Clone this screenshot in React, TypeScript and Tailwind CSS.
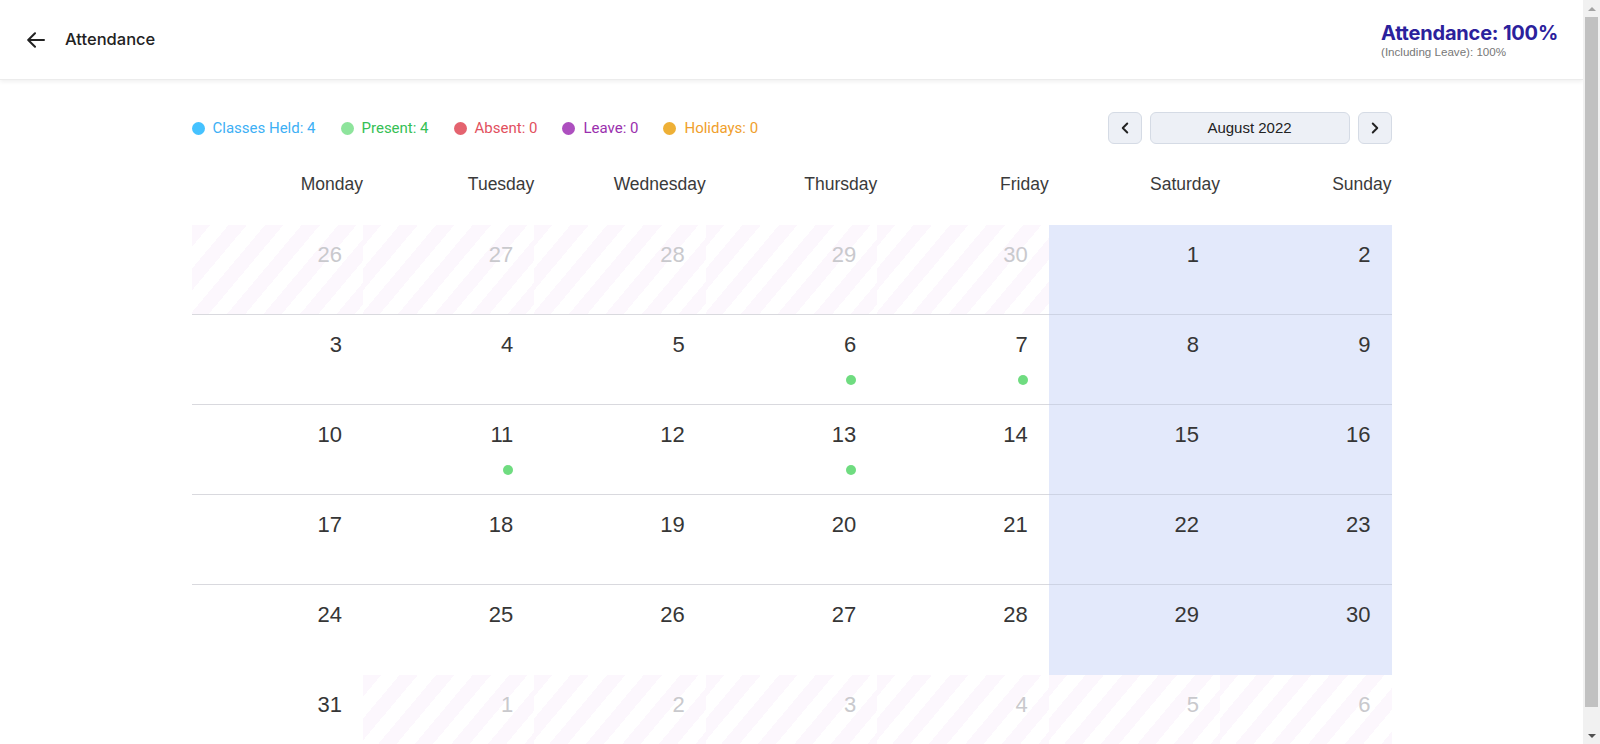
import { ChevronLeft, ChevronRight } from 'lucide-react'

type Cell = { day: number; out?: boolean; present?: boolean }

const DAYS = ['Monday', 'Tuesday', 'Wednesday', 'Thursday', 'Friday', 'Saturday', 'Sunday']

const PRESENT = [6, 7, 11, 13]

// August 2022 grid as laid out on the page
function buildWeeks(): Cell[][] {
  const cells: Cell[] = []
  for (let d = 26; d <= 30; d++) cells.push({ day: d, out: true })
  for (let d = 1; d <= 31; d++) cells.push({ day: d, present: PRESENT.includes(d) })
  for (let d = 1; d <= 6; d++) cells.push({ day: d, out: true })
  const weeks: Cell[][] = []
  for (let i = 0; i < cells.length; i += 7) weeks.push(cells.slice(i, i + 7))
  return weeks
}

const legend = [
  { label: 'Classes Held: 4', dot: 'bg-[#45c2ff]', text: 'text-[#3db0f5]' },
  { label: 'Present: 4', dot: 'bg-[#8ee49c]', text: 'text-[#35c055]' },
  { label: 'Absent: 0', dot: 'bg-[#e4636f]', text: 'text-[#e2505e]' },
  { label: 'Leave: 0', dot: 'bg-[#ad4fbf]', text: 'text-[#9a2fae]' },
  { label: 'Holidays: 0', dot: 'bg-[#eeb036]', text: 'text-[#f0a02c]' },
]

function DayCell({ cell, col, row }: { cell: Cell; col: number; row: number }) {
  const weekend = col >= 5 && !cell.out
  const bordered = row < 4
  return (
    <div
      className={[
        'h-[90px] flex flex-col items-end pr-[21px] pt-4',
        cell.out
          ? 'bg-[image:repeating-linear-gradient(130deg,#fcf7fd_0px,#fcf7fd_14px,#ffffff_14px,#ffffff_28px)]'
          : weekend
            ? 'bg-[#e3e9fb]'
            : 'bg-white',
        bordered ? (weekend ? 'border-b border-[#cdd3e4]' : 'border-b border-[#d9d9de]') : '',
      ].join(' ')}
    >
      <span
        className={[
          "font-['Liberation_Sans',Arial,sans-serif] text-[22px] leading-[28px]",
          cell.out ? 'text-[#c9c9cd]' : 'text-[#363636]',
        ].join(' ')}
      >
        {cell.day}
      </span>
      {cell.present && <span className="mt-4 w-[10px] h-[10px] rounded-full bg-[#6fdc80]" />}
    </div>
  )
}

function Scrollbar() {
  return (
    <div className="w-[17px] h-full bg-[#f1f1f1] flex flex-col items-center">
      <div className="h-[17px] flex items-center justify-center">
        <span className="w-0 h-0 border-l-[4px] border-r-[4px] border-b-[4px] border-l-transparent border-r-transparent border-b-[#a3a3a3]" />
      </div>
      <div className="w-[13px] h-[690px] bg-[#c1c1c1]" />
      <div className="flex-1" />
      <div className="h-[17px] flex items-center justify-center">
        <span className="w-0 h-0 border-l-[4px] border-r-[4px] border-t-[4px] border-l-transparent border-r-transparent border-t-[#505050]" />
      </div>
    </div>
  )
}

export default function App() {
  const weeks = buildWeeks()

  return (
    <div className="h-screen flex overflow-hidden bg-white">
      <div className="flex-1 min-w-0 overflow-hidden">
        {/* Header */}
        <header className="h-20 flex items-center justify-between pl-[27px] pr-[25px] bg-white border-b border-[#ececec] shadow-[0_2px_4px_rgba(0,0,0,0.06)]">
          <div className="flex items-center gap-5">
            <svg width="18" height="16" viewBox="0 0 18 16" fill="none" stroke="#222" strokeWidth="2" strokeLinecap="round" strokeLinejoin="round">
              <path d="M17 8H1.5M8 1.2L1.2 8l6.8 6.8" />
            </svg>
            <span className="font-['Inter',sans-serif] text-[16.5px] font-medium text-[#222]">Attendance</span>
          </div>
          <div className="flex flex-col items-start">
            <span className="font-['Inter',sans-serif] text-[20px] leading-[22px] font-bold text-[#2b219c] tracking-[-0.2px]">
              Attendance: 100%
            </span>
            <span className="mt-px font-['Liberation_Sans',Arial,sans-serif] text-[11.6px] leading-[13px] text-[#777]">
              (Including Leave): 100%
            </span>
          </div>
        </header>

        <main className="w-[1200px] mx-auto pt-8">
          {/* Legend + month nav */}
          <div className="h-8 flex items-center justify-between">
            <div className="flex items-center gap-[25px] font-['Roboto',sans-serif] text-[15px]">
              {legend.map((l) => (
                <div key={l.label} className="flex items-center gap-2">
                  <span className={`w-[13px] h-[13px] rounded-full ${l.dot}`} />
                  <span className={l.text}>{l.label}</span>
                </div>
              ))}
            </div>
            <div className="flex items-center gap-2">
              <button className="w-[34px] h-8 flex items-center justify-center rounded-md border border-[#d5dbe5] bg-[#edf0f6] text-[#222]">
                <ChevronLeft size={18} strokeWidth={2.6} />
              </button>
              <button className="w-[200px] h-8 flex items-center justify-center rounded-md border border-[#d5dbe5] bg-[#edf0f6] font-['Liberation_Sans',Arial,sans-serif] text-[15px] text-[#222]">
                August 2022
              </button>
              <button className="w-[34px] h-8 flex items-center justify-center rounded-md border border-[#d5dbe5] bg-[#edf0f6] text-[#222]">
                <ChevronRight size={18} strokeWidth={2.6} />
              </button>
            </div>
          </div>

          {/* Weekday headers */}
          <div className="h-[81px] grid grid-cols-7 items-center">
            {DAYS.map((d) => (
              <div key={d} className="text-right font-['Liberation_Sans',Arial,sans-serif] text-[17.5px] text-[#3a3a3a]">
                {d}
              </div>
            ))}
          </div>

          {/* Grid */}
          <div className="grid grid-cols-7">
            {weeks.map((week, r) =>
              week.map((cell, c) => <DayCell key={`${r}-${c}`} cell={cell} col={c} row={r} />),
            )}
          </div>
        </main>
      </div>
      <Scrollbar />
    </div>
  )
}
